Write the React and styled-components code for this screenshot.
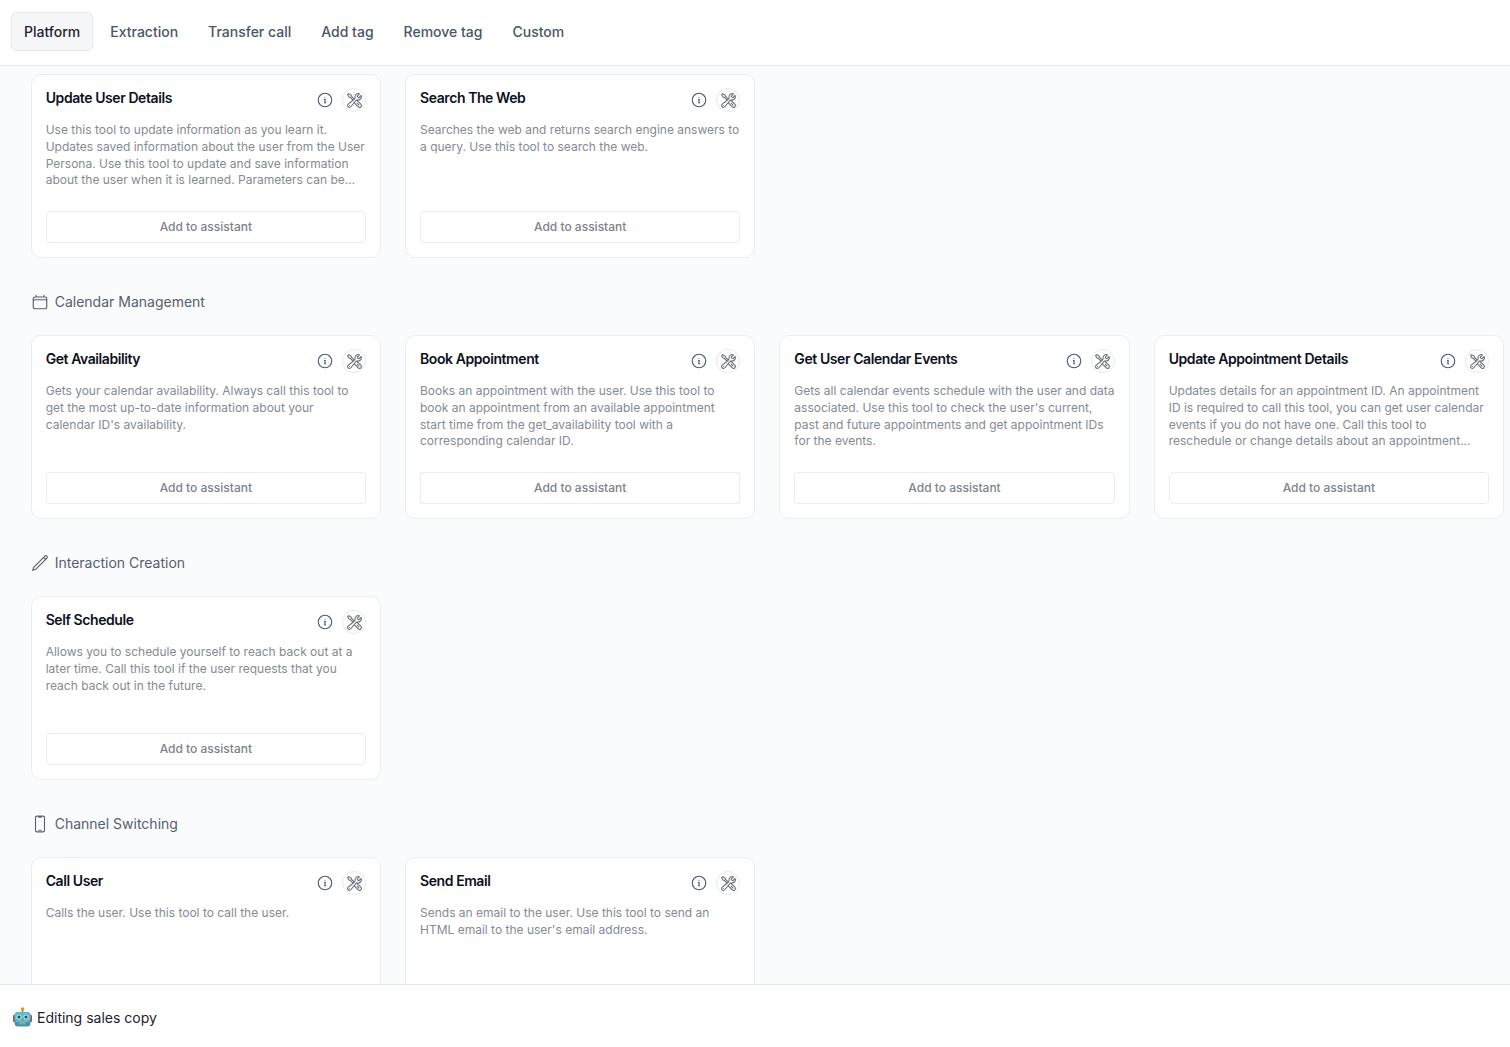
import React from 'react'
import styled, { createGlobalStyle } from 'styled-components'
import {
    HiOutlineCalendar,
    HiOutlineDevicePhoneMobile,
    HiOutlineInformationCircle,
    HiOutlinePencil,
    HiOutlineWrenchScrewdriver,
} from 'react-icons/hi2'

const GlobalStyle = createGlobalStyle`
    html, body {
        margin: 0;
        height: 100%;
        background: #fafbfd;
        font-family: Inter, "Noto Sans", sans-serif;
    }
    * { box-sizing: border-box; }
`

const Page = styled.div`
    height: 1047px;
    display: flex;
    flex-direction: column;
    overflow: hidden;
`

const Header = styled.header`
    height: 66px;
    flex: none;
    display: flex;
    align-items: flex-start;
    gap: 4px;
    padding: 12px 11px 0;
    background: #fff;
    border-bottom: 1px solid #e3e6ec;
`

const Tab = styled.button`
    height: 39px;
    padding: 0 12px;
    border: 1px solid ${props => props.$active ? '#e5e7eb' : 'transparent'};
    border-radius: 6px;
    background: ${props => props.$active ? '#f6f7f9' : 'transparent'};
    color: ${props => props.$active ? '#1f2430' : '#4b5565'};
    font: 500 14px Inter, sans-serif;
`

const Main = styled.main`
    flex: 1;
    min-height: 0;
    overflow: hidden;
    padding: 8px 6px 0 30.7px;
`

const SectionTitle = styled.div`
    height: 24px;
    margin: 32px 0 21px;
    display: flex;
    align-items: center;
    gap: 6px;
    color: #556070;
    font-size: 14px;
    svg {
        width: 18px;
        height: 18px;
        flex: none;
        stroke-width: 1.5;
    }
`

const SectionLabel = styled.span`
    margin-bottom: 2px;
`

const Grid = styled.div`
    display: grid;
    grid-template-columns: repeat(4, 1fr);
    gap: 24px;
`

const Card = styled.article`
    height: 184px;
    padding: 13px 14px 14px;
    display: flex;
    flex-direction: column;
    background: #fff;
    border: 1px solid #e9ecf2;
    border-radius: 10px;
`

const CardHead = styled.div`
    height: 24px;
    display: flex;
    align-items: flex-start;
    justify-content: space-between;
`

const CardTitle = styled.h3`
    margin: 0;
    color: #0c111d;
    font-size: 14px;
    font-weight: 600;
    line-height: 20px;
    letter-spacing: -0.42px;
`

const CardIcons = styled.div`
    display: flex;
    align-items: center;
    gap: 8px;
`

const InfoIcon = styled(HiOutlineInformationCircle)`
    width: 18px;
    height: 18px;
    color: #475a7d;
`

const ToolBadge = styled.span`
    width: 24px;
    height: 24px;
    display: flex;
    align-items: center;
    justify-content: center;
    border: 1px solid #e6e9f0;
    border-radius: 50%;
    color: #666b75;
    svg {
        width: 17px;
        height: 17px;
    }
`

const Description = styled.p`
    margin: 10px 0 0;
    flex: 1;
    color: #858a94;
    font-size: 12px;
    line-height: 16.75px;
`

const AddButton = styled.button`
    height: 32px;
    flex: none;
    margin-top: -1px;
    padding: 0 0 2px;
    border: 1px solid #e9ecf2;
    border-radius: 4px;
    background: #fff;
    color: #7d828c;
    font: 500 12px Inter, sans-serif;
`

const Footer = styled.footer`
    height: 63px;
    flex: none;
    display: flex;
    align-items: center;
    gap: 5px;
    padding: 4px 13px 2px;
    background: #fff;
    border-top: 1px solid #e3e6ec;
    color: #1d2130;
    font-size: 14px;
`

const tabs = ['Platform', 'Extraction', 'Transfer call', 'Add tag', 'Remove tag', 'Custom']

const sections = [
    {
        tools: [
            ['Update User Details', 'Use this tool to update information as you learn it. Updates saved information about the user from the User Persona. Use this tool to update and save information about the user when it is learned. Parameters can be...'],
            ['Search The Web', 'Searches the web and returns search engine answers to a query. Use this tool to search the web.'],
        ],
    },
    {
        title: 'Calendar Management',
        Icon: HiOutlineCalendar,
        tools: [
            ['Get Availability', "Gets your calendar availability. Always call this tool to get the most up-to-date information about your calendar ID's availability."],
            ['Book Appointment', 'Books an appointment with the user. Use this tool to book an appointment from an available appointment start time from the get_availability tool with a corresponding calendar ID.'],
            ['Get User Calendar Events', "Gets all calendar events schedule with the user and data associated. Use this tool to check the user's current, past and future appointments and get appointment IDs for the events."],
            ['Update Appointment Details', 'Updates details for an appointment ID. An appointment ID is required to call this tool, you can get user calendar events if you do not have one. Call this tool to reschedule or change details about an appointment...'],
        ],
    },
    {
        title: 'Interaction Creation',
        Icon: HiOutlinePencil,
        tools: [
            ['Self Schedule', 'Allows you to schedule yourself to reach back out at a later time. Call this tool if the user requests that you reach back out in the future.'],
        ],
    },
    {
        title: 'Channel Switching',
        Icon: HiOutlineDevicePhoneMobile,
        tools: [
            ['Call User', 'Calls the user. Use this tool to call the user.'],
            ['Send Email', "Sends an email to the user. Use this tool to send an HTML email to the user's email address."],
        ],
    },
]

// no emoji font in the sandbox, so the robot face is drawn
function RobotFace() {
    return (
        <svg width="19" height="20" viewBox="0 0 19 20">
            <circle cx="9.5" cy="2" r="1.8" fill="#f0932b" />
            <rect x="8.7" y="3" width="1.6" height="3" fill="#b9743a" />
            <rect x="0" y="8" width="2.5" height="7" rx="1" fill="#c2423f" />
            <rect x="16.5" y="8" width="2.5" height="7" rx="1" fill="#c2423f" />
            <rect x="1.5" y="5" width="16" height="14.5" rx="3.5" fill="#3f97a8" />
            <rect x="1.5" y="5" width="16" height="10" rx="3.5" fill="#5dbccb" />
            <circle cx="6" cy="10" r="2.6" fill="#a9e3ea" />
            <circle cx="13" cy="10" r="2.6" fill="#a9e3ea" />
            <circle cx="6" cy="10" r="1.5" fill="#24505f" />
            <circle cx="13" cy="10" r="1.5" fill="#24505f" />
            <circle cx="9.5" cy="12.4" r="0.9" fill="#d8504a" />
            <rect x="6" y="15" width="7" height="2.4" rx="0.6" fill="#8d9fb0" />
        </svg>
    )
}

function ToolCard({ name, text }) {
    return (
        <Card>
            <CardHead>
                <CardTitle>{name}</CardTitle>
                <CardIcons>
                    <InfoIcon />
                    <ToolBadge><HiOutlineWrenchScrewdriver /></ToolBadge>
                </CardIcons>
            </CardHead>
            <Description>{text}</Description>
            <AddButton>Add to assistant</AddButton>
        </Card>
    )
}

export default function App() {
    return (
        <Page>
            <GlobalStyle />
            <Header>
                {tabs.map((tab, i) => <Tab key={tab} $active={i === 0}>{tab}</Tab>)}
            </Header>
            <Main>
                {sections.map(({ title, Icon, tools }, i) => (
                    <section key={i}>
                        {title && <SectionTitle><Icon /><SectionLabel>{title}</SectionLabel></SectionTitle>}
                        <Grid>
                            {tools.map(([name, text]) => <ToolCard key={name} name={name} text={text} />)}
                        </Grid>
                    </section>
                ))}
            </Main>
            <Footer><RobotFace />Editing sales copy</Footer>
        </Page>
    )
}
